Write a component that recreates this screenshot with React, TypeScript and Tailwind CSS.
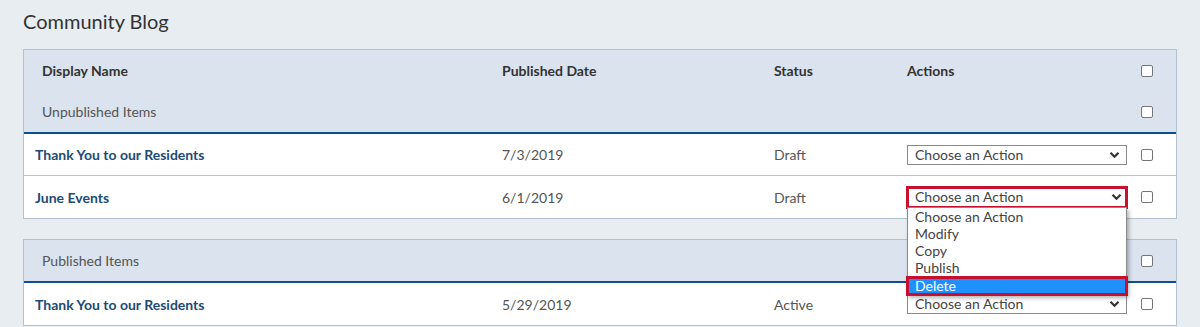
import React from "react";

const FONT = { fontFamily: "Lato, 'Noto Sans', Arial, sans-serif" };

function Check() {
  return <span className="block w-[12px] h-[12px] rounded-[2px] border border-[#767676] bg-white" />;
}

function Chevron() {
  return (
    <svg width="11" height="8" viewBox="0 0 11 8" aria-hidden>
      <path d="M1.5 1.8 L5.5 5.8 L9.5 1.8" fill="none" stroke="#333" strokeWidth="2.2" />
    </svg>
  );
}

function Select({ open = false }: { open?: boolean }) {
  if (!open) {
    return (
      <div className="flex items-center justify-between w-[220px] h-[20px] border border-[#8a8a8a] bg-white pl-[7px] pr-[6px] text-[14px] text-[#444] leading-none">
        <span>Choose an Action</span>
        <Chevron />
      </div>
    );
  }
  const opts = ["Choose an Action", "Modify", "Copy", "Publish"];
  return (
    <div className="relative w-[220px]">
      <div className="flex items-center justify-between -mx-[1px] h-[23px] border-[3px] border-[#c8102e] bg-white pl-[6px] pr-[3px] text-[14px] text-[#444] leading-none">
        <span>Choose an Action</span>
        <Chevron />
      </div>
      <div className="absolute left-0 top-[21px] z-10 w-[220px] border border-[#8a8a8a] bg-white shadow-[2px_3px_4px_rgba(0,0,0,0.3)] text-[14px] leading-[17px] text-[#444]">
        {opts.map(o => (
          <div key={o} className="pl-[7px] h-[17px]">{o}</div>
        ))}
        <div className="-mx-[2px] -mb-[2px] border-[3px] border-[#c8102e]">
          <div className="pl-[6px] h-[14px] leading-[14px] bg-[#1e90ff] text-white">Delete</div>
        </div>
      </div>
    </div>
  );
}

interface Item { name: string; date: string; status: string; open?: boolean }

function Row({ item, last }: { item: Item; last?: boolean }) {
  return (
    <div className={`flex items-center h-[42px] bg-white ${last ? "" : "border-b border-[#b3c1d1]"}`}>
      <div className="w-[478px] pl-[11px] text-[14px] font-bold text-[#1b4b76]">{item.name}</div>
      <div className="w-[272px] text-[14px] text-[#555]">{item.date}</div>
      <div className="w-[133px] text-[14px] text-[#555]">{item.status}</div>
      <div className="w-[234px]">
        <Select open={item.open} />
      </div>
      <div className="flex-1"><Check /></div>
    </div>
  );
}

function GroupHeader({ label }: { label: string }) {
  return (
    <div className="flex items-center h-[41px] bg-[#dae3ee] border-b-2 border-[#0d4f86] box-content">
      <div className="w-[1117px] pl-[18px] text-[14px] text-[#555]">{label}</div>
      <div className="flex-1"><Check /></div>
    </div>
  );
}

export default function App() {
  const unpublished: Item[] = [
    { name: "Thank You to our Residents", date: "7/3/2019", status: "Draft" },
    { name: "June Events", date: "6/1/2019", status: "Draft", open: true },
  ];
  const published: Item[] = [
    { name: "Thank You to our Residents", date: "5/29/2019", status: "Active" },
  ];

  return (
    <div className="w-[1200px] h-[327px] overflow-hidden bg-[#e8edf2] px-[23px]" style={FONT}>
      <div className="h-[49px] pt-[7px] text-[20px] leading-[28px] text-[#333]">Community Blog</div>

      <div className="border border-[#b3c1d1]">
        <div className="flex items-center h-[41px] bg-[#dae3ee] text-[14px] font-bold text-[#333]">
          <div className="w-[478px] pl-[18px]">Display Name</div>
          <div className="w-[272px]">Published Date</div>
          <div className="w-[133px]">Status</div>
          <div className="w-[234px]">Actions</div>
          <div className="flex-1"><Check /></div>
        </div>
        <GroupHeader label="Unpublished Items" />
        {unpublished.map((it, i) => (
          <Row key={i} item={it} last={i === unpublished.length - 1} />
        ))}
      </div>

      <div className="mt-[20px] border border-[#b3c1d1]">
        <GroupHeader label="Published Items" />
        {published.map((it, i) => (
          <Row key={i} item={it} last={i === published.length - 1} />
        ))}
      </div>
    </div>
  );
}
